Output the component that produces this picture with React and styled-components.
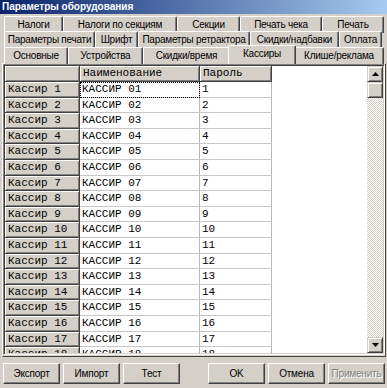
import React from 'react';
import styled, { createGlobalStyle, css } from 'styled-components';

const Global = createGlobalStyle`
  html, body { margin: 0; padding: 0; background: #d4d0c8; }
  body { width: 387px; height: 388px; overflow: hidden; font-family: "Liberation Sans", Arial, sans-serif; }
  * { box-sizing: border-box; }
`;

const Window = styled.div`
  width: 387px;
  height: 388px;
  display: flex;
  flex-direction: column;
  background: #d4d0c8;
  overflow: hidden;
`;

const TitleBar = styled.div`
  height: 14px;
  flex: none;
  background: linear-gradient(to right, #0a246a, #a6caf0);
  color: #fff;
  font-weight: bold;
  font-size: 10px;
  line-height: 14px;
  padding-left: 2px;
  white-space: nowrap;
`;

const TabStack = styled.div`
  display: flex;
  flex-direction: column;
  margin-top: 2px;
  flex: none;
`;

const TabRow = styled.div`
  display: flex;
  height: ${p => p.$h}px;
  padding-left: 4px;
  position: relative;
  z-index: ${p => p.$z};
`;

const Tab = styled.div`
  flex: none;
  width: ${p => p.$w}px;
  height: 17px;
  background: #d4d0c8;
  border-top: 1px solid #fff;
  border-left: 1px solid #fff;
  border-right: 1px solid #404040;
  box-shadow: inset -1px 0 #808080;
  border-radius: 2px 2px 0 0;
  font-size: 10px;
  letter-spacing: -0.25px;
  line-height: 15px;
  color: #000;
  text-align: center;
  white-space: nowrap;
  overflow: hidden;
  position: relative;
  ${p => p.$active && css`
    width: ${p.$w + 4}px;
    margin: -2px -2px 0 -2px;
    height: 19px;
    z-index: 2;
    line-height: 15px;
  `}
`;

const Panel = styled.div`
  margin: 0 1px 0 2px;
  border-top: 1px solid #fff;
  border-left: 1px solid #fff;
  border-right: 1px solid #404040;
  border-bottom: 1px solid #404040;
  padding: 0 0 1px 0;
  flex: none;
  position: relative;
  z-index: 1;
`;

const Grid = styled.div`
  height: 291px;
  display: flex;
  border-top: 1px solid #808080;
  border-left: 1px solid #808080;
  border-right: 1px solid #fff;
  border-bottom: 1px solid #fff;
  box-shadow: inset 1px 1px #404040, inset -1px -1px #d4d0c8;
  padding: 1px;
  background: #fff;
`;

const Cells = styled.div`
  flex: 1;
  overflow: hidden;
  background: #fff;
`;

const Row = styled.div`
  display: flex;
  height: ${p => p.$h}px;
`;

const cellText = css`
  font-family: "Liberation Mono", "Courier New", monospace;
  font-size: 11px;
  line-height: 15px;
  white-space: nowrap;
  overflow: hidden;
  color: #000;
`;

const FixedCell = styled.div`
  ${cellText};
  flex: none;
  width: ${p => p.$w}px;
  height: 100%;
  background: #d4d0c8;
  border-right: 1px solid #404040;
  border-bottom: 1px solid #404040;
  box-shadow: inset 1px 1px #fff, inset -1px -1px #808080;
  padding-left: 3px;
`;

const DataCell = styled.div`
  ${cellText};
  flex: none;
  width: ${p => p.$w}px;
  height: 100%;
  background: #fff;
  border-right: 1px solid #b8b8b8;
  border-bottom: 1px solid #c8c8c8;
  padding-left: 2px;
  ${p => p.$focus && css`
    outline: 1px dotted #000;
    outline-offset: -1px;
  `}
`;

const ScrollBar = styled.div`
  flex: none;
  width: 16px;
  display: flex;
  flex-direction: column;
  background-color: #fff;
  background-image: repeating-conic-gradient(#d4d0c8 0 25%, #fff 0 50%);
  background-size: 2px 2px;
`;

const ScrollBtn = styled.div`
  flex: none;
  height: 16px;
  background: #d4d0c8;
  border-top: 1px solid #d4d0c8;
  border-left: 1px solid #d4d0c8;
  border-right: 1px solid #404040;
  border-bottom: 1px solid #404040;
  box-shadow: inset 1px 1px #fff, inset -1px -1px #808080;
  display: flex;
  align-items: center;
  justify-content: center;
`;

const Track = styled.div`
  flex: 1;
`;

const ButtonBar = styled.div`
  display: flex;
  justify-content: space-between;
  padding: 6px 2px 0 3px;
`;

const ButtonGroup = styled.div`
  display: flex;
  gap: 3px;
`;

const Button = styled.button`
  width: 57px;
  height: 21px;
  padding: 0;
  margin: 0;
  background: #d4d0c8;
  border-top: 1px solid #fff;
  border-left: 1px solid #fff;
  border-right: 1px solid #404040;
  border-bottom: 1px solid #404040;
  border-radius: 0;
  box-shadow: inset -1px -1px #808080;
  font-family: "Liberation Sans", Arial, sans-serif;
  font-size: 10px;
  letter-spacing: -0.2px;
  color: ${p => (p.disabled ? '#808080' : '#000')};
  text-shadow: ${p => (p.disabled ? '1px 1px #fff' : 'none')};
`;

const tabs = [
  [
    { l: 'Налоги', w: 59 },
    { l: 'Налоги по секциям', w: 114 },
    { l: 'Секции', w: 63 },
    { l: 'Печать чека', w: 82 },
    { l: 'Печать', w: 62 },
  ],
  [
    { l: 'Параметры печати', w: 91 },
    { l: 'Шрифт', w: 43 },
    { l: 'Параметры ретрактора', w: 112 },
    { l: 'Скидки/надбавки', w: 89 },
    { l: 'Оплата', w: 43 },
  ],
  [
    { l: 'Основные', w: 64 },
    { l: 'Устройства', w: 75 },
    { l: 'Скидки/время', w: 87 },
    { l: 'Кассиры', w: 64, active: true },
    { l: 'Клише/реклама', w: 90 },
  ],
];

const rowHeights = [15, 16, 16];

const rows = Array.from({ length: 18 }, (_, i) => ({
  fixed: `Кассир ${i + 1}`,
  name: `КАССИР ${String(i + 1).padStart(2, '0')}`,
  pass: String(i + 1),
}));

const Arrow = ({ down }) => (
  <svg width="7" height="4" viewBox="0 0 7 4">
    <polygon points={down ? '0,0 7,0 3.5,4' : '0,4 7,4 3.5,0'} fill="#000" />
  </svg>
);

export default function App() {
  return (
    <Window>
      <Global />
      <TitleBar>Параметры оборудования</TitleBar>
      <TabStack>
        {tabs.map((row, ri) => (
          <TabRow key={ri} $h={rowHeights[ri]} $z={ri + 1}>
            {row.map(t => (
              <Tab key={t.l} $w={t.w} $active={t.active}>
                {t.l}
              </Tab>
            ))}
          </TabRow>
        ))}
      </TabStack>
      <Panel>
        <Grid>
          <Cells>
            <Row $h={16}>
              <FixedCell $w={75} />
              <FixedCell $w={120}>Наименование</FixedCell>
              <FixedCell $w={72}>Пароль</FixedCell>
            </Row>
            {rows.map((r, i) => (
              <Row key={i} $h={15.6}>
                <FixedCell $w={75}>{r.fixed}</FixedCell>
                <DataCell $w={120} $focus={i === 0}>{r.name}</DataCell>
                <DataCell $w={72}>{r.pass}</DataCell>
              </Row>
            ))}
          </Cells>
          <ScrollBar>
            <ScrollBtn><Arrow /></ScrollBtn>
            <ScrollBtn />
            <Track />
            <ScrollBtn><Arrow down /></ScrollBtn>
          </ScrollBar>
        </Grid>
      </Panel>
      <ButtonBar>
        <ButtonGroup>
          <Button>Экспорт</Button>
          <Button>Импорт</Button>
          <Button>Тест</Button>
        </ButtonGroup>
        <ButtonGroup>
          <Button>OK</Button>
          <Button>Отмена</Button>
          <Button disabled>Применить</Button>
        </ButtonGroup>
      </ButtonBar>
    </Window>
  );
}
